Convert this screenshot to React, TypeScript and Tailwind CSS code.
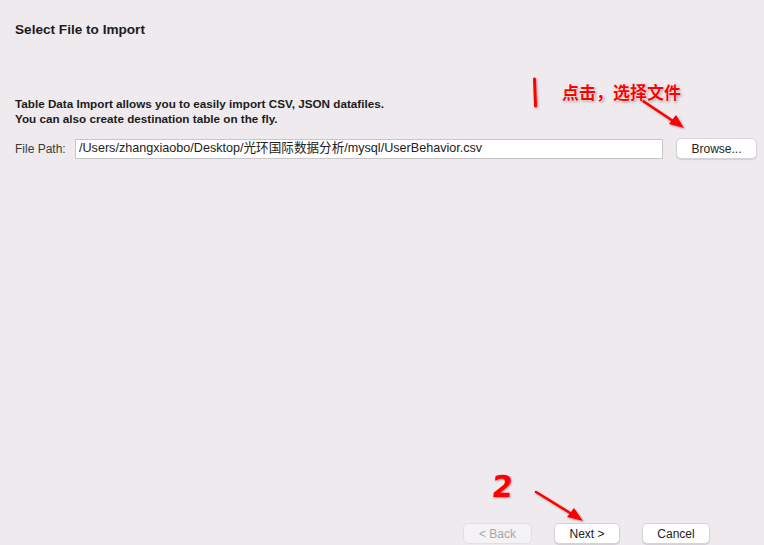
import React from "react";

export default function App() {
  const font = { fontFamily: '"Liberation Sans", "Noto Sans CJK SC", Arial, sans-serif' };
  return (
    <div
      className="relative w-[764px] h-[545px] overflow-hidden bg-[#eeeaee] flex flex-col text-[#222]"
      style={font}
    >
      <div className="pl-[15px] pt-[21px] text-[13.6px] leading-[17px] font-bold text-[#1c1c1c]">
        Select File to Import
      </div>
      <div className="pl-[15px] mt-[58px] text-[11.7px] leading-[15px] font-bold text-[#1c1c1c]">
        <div>Table Data Import allows you to easily import CSV, JSON datafiles.</div>
        <div>You can also create destination table on the fly.</div>
      </div>
      <div className="flex items-center pl-[15px] mt-[12px] h-[21px]">
        <span className="text-[12px] text-[#3a3a3a] w-[60px]">File Path:</span>
        <div className="ml-0 w-[588px] h-[20px] bg-white border border-[#c9c6c9] flex items-center pl-[3px] text-[12.6px] text-[#222] whitespace-nowrap overflow-hidden">
          /Users/zhangxiaobo/Desktop/光环国际数据分析/mysql/UserBehavior.csv
        </div>
        <button className="ml-[13px] w-[81px] h-[21px] bg-white rounded-[5px] border border-[#d6d3d6] shadow-[0_1px_1px_rgba(0,0,0,0.12)] text-[12px] text-[#222] flex items-center justify-center">
          Browse...
        </button>
      </div>
      <div className="mt-auto flex justify-end pr-[54px] gap-[22px] pb-[1px]">
        <button className="w-[69px] h-[21px] bg-[#f5f2f5] rounded-[5px] border border-[#e2dfe2] text-[12px] text-[#a8a6a8] flex items-center justify-center">
          &lt; Back
        </button>
        <button className="w-[66px] h-[21px] bg-white rounded-[5px] border border-[#d6d3d6] shadow-[0_1px_1px_rgba(0,0,0,0.12)] text-[12px] text-[#222] flex items-center justify-center">
          Next &gt;
        </button>
        <button className="w-[68px] h-[21px] bg-white rounded-[5px] border border-[#d6d3d6] shadow-[0_1px_1px_rgba(0,0,0,0.12)] text-[12px] text-[#222] flex items-center justify-center">
          Cancel
        </button>
      </div>

      {/* annotations */}
      <svg className="absolute inset-0 pointer-events-none" width="764" height="545" viewBox="0 0 764 545">
        <defs>
          <filter id="sh" x="-20%" y="-20%" width="140%" height="140%">
            <feDropShadow dx="1" dy="1" stdDeviation="1" floodColor="#000" floodOpacity="0.35" />
          </filter>
        </defs>
        <g filter="url(#sh)" fill="#ff0000" stroke="#ff0000" strokeLinecap="round">
          <path d="M534.5 79 L535.5 106" strokeWidth="3" fill="none" />
          <path d="M643 101 L676 123" strokeWidth="2.6" fill="none" />
          <polygon points="684,128 669,124 676,115" stroke="none" />
          <path d="M536 492 L575 516" strokeWidth="2.6" fill="none" />
          <polygon points="583,521 567,517 574,508" stroke="none" />
        </g>
      </svg>
      <div
        className="absolute left-[562px] top-[82px] text-[17px] leading-[20px] font-bold text-[#ff0000] [text-shadow:0_0_2px_#fff,0_0_2px_#fff,1px_1px_3px_rgba(0,0,0,0.45)]"
        style={{ fontFamily: '"Noto Sans CJK SC", sans-serif' }}
      >
        点击，选择文件
      </div>
      <div
        className="absolute left-[492px] top-[470px] text-[30px] leading-[34px] font-bold text-[#ff0000] [text-shadow:1px_1px_2px_rgba(0,0,0,0.35)] -skew-x-6"
        style={{ fontFamily: '"DejaVu Sans", sans-serif' }}
      >
        2
      </div>
    </div>
  );
}
